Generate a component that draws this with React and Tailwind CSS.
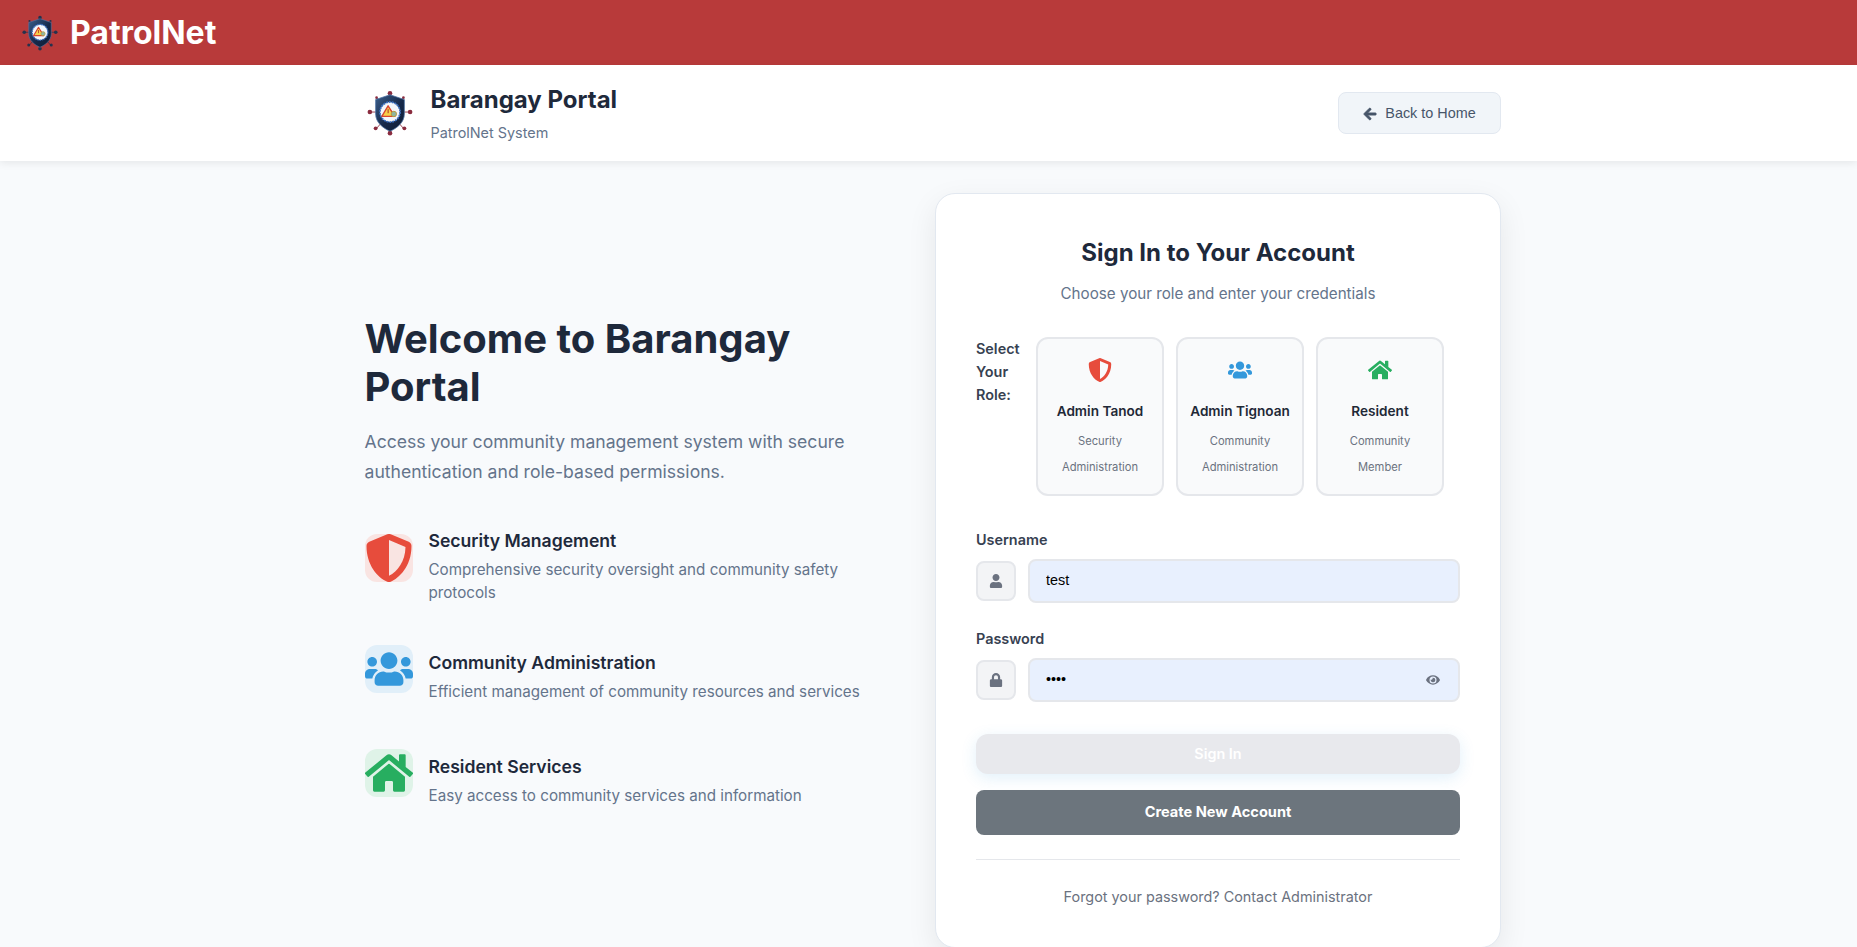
import { useId } from "react";
import { FaArrowLeft, FaEye, FaHome, FaLock, FaShieldAlt, FaUser, FaUsers } from "react-icons/fa";

function Logo({ className, knob = "#8a2c3f" }) {
  const gradientId = useId();
  return (
    <svg viewBox="0 0 48 48" className={className}>
      <defs>
        <linearGradient id={gradientId} x1="0" y1="0" x2="1" y2="1">
          <stop offset="0" stopColor="#3b5f8c" />
          <stop offset="0.55" stopColor="#16294a" />
          <stop offset="1" stopColor="#0f1c33" />
        </linearGradient>
      </defs>
      <g stroke={knob} strokeWidth="0.9">
        <line x1="24" y1="3" x2="24" y2="45" />
        <line x1="3" y1="23" x2="45" y2="23" />
        <line x1="10" y1="8" x2="38" y2="40" />
        <line x1="38" y1="8" x2="10" y2="40" />
      </g>
      <g fill={knob}>
        <circle cx="24" cy="3.5" r="2.4" />
        <circle cx="24" cy="45" r="2.4" />
        <circle cx="3" cy="23" r="2.4" />
        <circle cx="45" cy="23" r="2.4" />
        <circle cx="9" cy="40" r="2" />
        <circle cx="39" cy="40" r="2" />
        <circle cx="10" cy="8" r="1.4" />
        <circle cx="38" cy="8" r="1.4" />
      </g>
      <path
        d="M24 5 L39 10 V25 C39 34 31 40 24 43 C17 40 9 34 9 25 V10 Z"
        fill={`url(#${gradientId})`}
        stroke="#4f74a6"
        strokeWidth="0.8"
      />
      <circle cx="24" cy="23" r="10.5" fill="#f4f6fa" />
      <circle cx="24" cy="23" r="10.5" fill="none" stroke="#3a6fc0" strokeWidth="1.8" strokeDasharray="2 1" />
      <path d="M22 16.5 L29 27.5 H15.5 Z" fill="#f6d04a" stroke="#d8432f" strokeWidth="1.4" strokeLinejoin="round" />
      <rect x="21.5" y="20" width="1.1" height="4.2" fill="#b0392b" />
      <circle cx="28" cy="25" r="2.8" fill="#8fb6a0" stroke="#b89a3a" strokeWidth="1" />
    </svg>
  );
}

const features = [
  {
    title: "Security Management",
    text: "Comprehensive security oversight and community safety protocols",
    Icon: FaShieldAlt,
    tile: "bg-[#f9e4e2] text-[#e74c3c]",
    gap: "mb-[41px]",
    offset: "-mt-[5px]",
  },
  {
    title: "Community Administration",
    text: "Efficient management of community resources and services",
    Icon: FaUsers,
    tile: "bg-[#e1eff9] text-[#3498db]",
    gap: "mb-[46px]",
    offset: "mt-[6px]",
  },
  {
    title: "Resident Services",
    text: "Easy access to community services and information",
    Icon: FaHome,
    tile: "bg-[#dff3e8] text-[#27ae60]",
    gap: "",
    offset: "mt-[6px]",
  },
];

const roles = [
  { title: "Admin Tanod", lines: ["Security", "Administration"], Icon: FaShieldAlt, color: "text-[#e74c3c]" },
  { title: "Admin Tignoan", lines: ["Community", "Administration"], Icon: FaUsers, color: "text-[#3498db]" },
  { title: "Resident", lines: ["Community", "Member"], Icon: FaHome, color: "text-[#27ae60]" },
];

function Feature({ feature }) {
  const { Icon } = feature;
  return (
    <div className={`flex items-start gap-4 ${feature.gap}`}>
      <div className={`flex h-12 w-12 shrink-0 items-center justify-center rounded-xl ${feature.tile}`}>
        <Icon className="h-12 w-12" />
      </div>
      <div className={feature.offset}>
        <h3 className="text-[17.6px] leading-[23px] font-semibold text-[#1e293b]">{feature.title}</h3>
        <p className="mt-[6px] text-[15.2px] leading-[23px] text-[#64748b]">{feature.text}</p>
      </div>
    </div>
  );
}

function RoleCard({ role }) {
  const { Icon } = role;
  return (
    <div className="flex h-[159px] w-[128px] flex-col items-center rounded-xl border-2 border-[#e5e7eb] bg-[#f9fafb] pt-[19px]">
      <Icon className={`h-6 w-6 ${role.color}`} />
      <div className="mt-[19px] text-[13.6px] leading-[20px] font-semibold text-[#1f2937]">{role.title}</div>
      <div className="mt-[7px] text-center text-[11.2px] leading-[26px] text-[#6b7280]">
        {role.lines.map((line) => (
          <div key={line}>{line}</div>
        ))}
      </div>
    </div>
  );
}

function Field({ label, Icon, type, value, trailing, className }) {
  return (
    <div className={className}>
      <label className="block text-[14.4px] leading-[20px] font-semibold text-[#374151]">{label}</label>
      <div className="mt-[9px] flex items-center gap-3">
        <div className="flex h-10 w-10 shrink-0 items-center justify-center rounded-lg border-2 border-[#e5e7eb] bg-[#f3f4f6] text-[#6b7280]">
          <Icon className="h-[14px] w-[14px]" />
        </div>
        <div className="flex h-11 flex-1 items-center rounded-lg border-2 border-[#e5e7eb] bg-[#e8f0fe] pr-[18px] pl-4">
          <input
            readOnly
            type={type}
            value={value}
            className="min-w-0 flex-1 bg-transparent font-['Liberation_Sans',sans-serif] text-[14.4px] text-black outline-none"
          />
          {trailing}
        </div>
      </div>
    </div>
  );
}

export default function App() {
  return (
    <div className="h-[947px] overflow-hidden bg-[#f8fafc] font-['Inter',sans-serif]">
      <div className="flex h-[65px] items-center bg-[#b83a3a] pl-[22px]">
        <Logo className="h-9 w-9" knob="#26324d" />
        <span className="ml-3 text-[32px] font-bold text-white">PatrolNet</span>
      </div>

      <header className="h-[96px] bg-white shadow-[0_2px_8px_rgba(0,0,0,0.08)]">
        <div className="ml-[364.5px] flex h-full w-[1136.5px] items-center justify-between">
          <div className="flex items-center gap-[18px] pl-[2px]">
            <Logo className="h-[46px] w-[46px]" />
            <div className="pt-[2px]">
              <h1 className="text-[24px] leading-[30px] font-bold text-[#1e293b]">Barangay Portal</h1>
              <p className="mt-[8px] text-[14.4px] leading-[20px] text-[#64748b]">PatrolNet System</p>
            </div>
          </div>
          <button
            type="button"
            className="flex h-[42px] w-[163px] items-center justify-center gap-2 rounded-lg border border-[#e2e8f0] bg-[#f1f5f9] pt-px font-['Liberation_Sans',sans-serif] text-[14.4px] text-[#475569]"
          >
            <FaArrowLeft className="h-[14px] w-[14px]" stroke="currentColor" strokeWidth={30} />
            Back to Home
          </button>
        </div>
      </header>

      <main className="ml-[364.5px] flex w-[1136.5px] items-start justify-between pt-8">
        <section className="w-[500px] pt-[122px]">
          <h2 className="text-[40px] leading-[48px] font-bold text-[#1e293b]">Welcome to Barangay Portal</h2>
          <p className="mt-[16px] text-[17.6px] leading-[30px] text-[#64748b]">
            Access your community management system with secure authentication and role-based permissions.
          </p>
          <div className="mt-[47px]">
            {features.map((feature) => (
              <Feature key={feature.title} feature={feature} />
            ))}
          </div>
        </section>

        <section className="w-[566px] rounded-[20px] border border-[#e2e8f0] bg-white px-10 pt-[40px] pb-10 shadow-[0_10px_30px_rgba(0,0,0,0.08)]">
          <h2 className="text-center text-[24px] leading-[38px] font-bold text-[#1e293b]">Sign In to Your Account</h2>
          <p className="mt-[10px] text-center text-[15.2px] leading-[23px] text-[#64748b]">
            Choose your role and enter your credentials
          </p>

          <div className="mt-[32px] flex">
            <div className="w-[60px] text-[14.4px] leading-[23px] font-semibold text-[#374151]">
              Select Your Role:
            </div>
            <div className="flex gap-[12px]">
              {roles.map((role) => (
                <RoleCard key={role.title} role={role} />
              ))}
            </div>
          </div>

          <Field className="mt-[34px]" label="Username" Icon={FaUser} type="text" value="test" />
          <Field
            className="mt-[26px]"
            label="Password"
            Icon={FaLock}
            type="password"
            value="test"
            trailing={<FaEye className="h-[14px] w-[14px] text-[#6b7280]" />}
          />

          <button
            type="button"
            className="mt-[32px] h-[40px] w-full rounded-xl bg-[#e8e9ed] text-[14.4px] font-semibold text-white shadow-[0_4px_15px_rgba(52,152,219,0.15)]"
          >
            Sign In
          </button>
          <button
            type="button"
            className="mt-[16px] h-[45px] w-full rounded-lg bg-[#6c757d] pt-px text-[14.6px] font-bold text-white"
          >
            Create New Account
          </button>

          <div className="mt-[24px] border-t border-[#e5e7eb] pt-[27px] text-center text-[14.4px] leading-[20px] text-[#6b7280]">
            Forgot your password? Contact Administrator
          </div>
        </section>
      </main>
    </div>
  );
}
